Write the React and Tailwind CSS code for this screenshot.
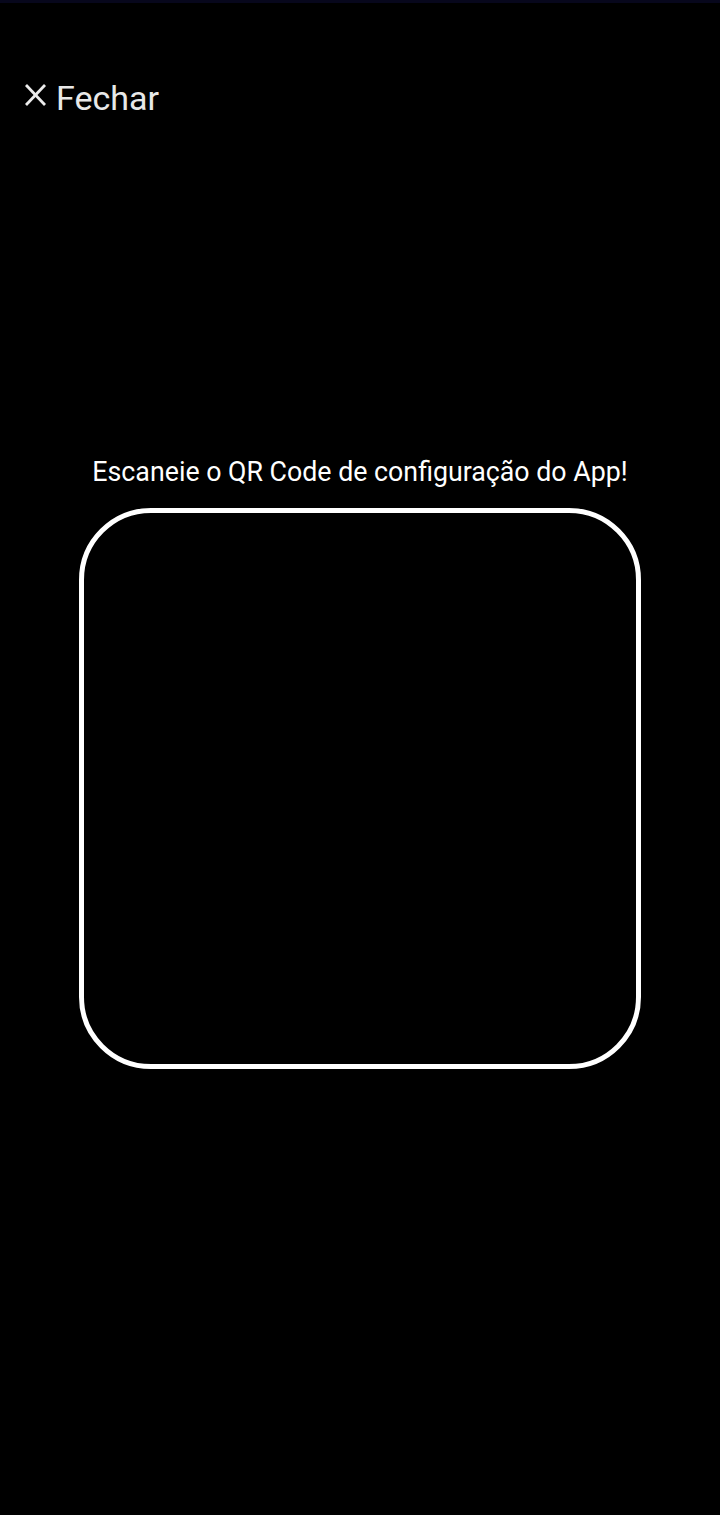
export default function App() {
    return (
        <div
            className="min-h-[1515px] w-full bg-black flex flex-col"
            style={{ fontFamily: "Roboto, 'Noto Sans', sans-serif" }}
        >
            {/* status strip */}
            <div className="h-[3px] w-full bg-[#07071c]" />

            {/* Close */}
            <div className="mt-[78px] pl-[25px] flex items-start">
                <svg
                    width="21"
                    height="22"
                    viewBox="0 0 21 22"
                    className="mt-[3px]"
                    fill="none"
                    stroke="#ececec"
                    strokeWidth="2.8"
                >
                    <line x1="1" y1="1" x2="20" y2="21" />
                    <line x1="20" y1="1" x2="1" y2="21" />
                </svg>
                <span className="ml-[10px] text-[34px] leading-none text-[#e8e8e8]">
                    Fechar
                </span>
            </div>

            {/* Scanner */}
            <div className="mt-[344px] flex flex-col items-center">
                <p className="text-[26.75px] leading-none text-white">
                    Escaneie o QR Code de configuração do App!
                </p>
                <div className="mt-[22px] w-[562px] h-[561px] rounded-[72px] border-[5px] border-white" />
            </div>
        </div>
    );
}
